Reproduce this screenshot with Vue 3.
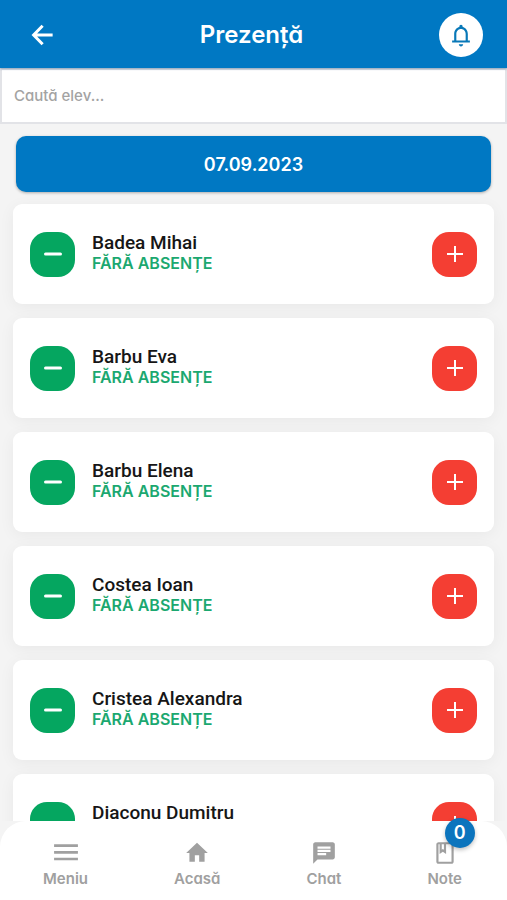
<script setup>
import { ref, computed } from 'vue'

const query = ref('')
const students = ref([
  { name: 'Badea Mihai', absences: 0 },
  { name: 'Barbu Eva', absences: 0 },
  { name: 'Barbu Elena', absences: 0 },
  { name: 'Costea Ioan', absences: 0 },
  { name: 'Cristea Alexandra', absences: 0 },
  { name: 'Diaconu Dumitru', absences: 0 },
])

const visible = computed(() =>
  students.value.filter((s) => s.name.toLowerCase().includes(query.value.toLowerCase())),
)

function change(student, step) {
  student.absences = Math.max(0, student.absences + step)
}
</script>

<template>
  <div class="page">
    <header class="topbar">
      <button class="back" type="button" aria-label="Înapoi">
        <svg viewBox="0 0 24 24" width="30" height="30" aria-hidden="true">
          <path d="M20.500 12H5.500M12.500 4.600 5.300 12l7.200 7.400" />
        </svg>
      </button>
      <h1>Prezență</h1>
      <button class="bell" type="button" aria-label="Notificări">
        <svg viewBox="0 0 24 24" width="26" height="26" aria-hidden="true">
          <path d="M12 22.500c1.100 0 2-.9 2-2h-4c0 1.100.9 2 2 2zM18.300 17v-6c0-3.070-1.900-5.640-4.800-6.320V4c0-.83-.67-1.500-1.500-1.500s-1.500.67-1.500 1.500v.68C7.640 5.360 5.700 7.920 5.700 11v6H3.800v2h16.400v-2zM16.300 17H7.700v-6c0-2.480 1.800-4.500 4.300-4.500s4.300 2.020 4.300 4.500z" />
        </svg>
      </button>
    </header>

    <input v-model="query" class="search" type="text" placeholder="Caută elev..." aria-label="Caută elev" />

    <main class="content">
      <button class="date" type="button">07.09.2023</button>
      <ul class="list">
        <li v-for="s in visible" :key="s.name" class="card">
          <button class="step minus" type="button" aria-label="Scade absență" @click="change(s, -1)">
            <svg viewBox="0 0 24 24" width="24" height="24" aria-hidden="true"><path d="M4.500 12h15" /></svg>
          </button>
          <div class="info">
            <span class="name">{{ s.name }}</span>
            <span class="status">{{ s.absences ? `${s.absences} ABSENȚE` : 'FĂRĂ ABSENȚE' }}</span>
          </div>
          <button class="step plus" type="button" aria-label="Adaugă absență" @click="change(s, 1)">
            <svg viewBox="0 0 24 24" width="24" height="24" aria-hidden="true"><path d="M4 12h16M12 4v16" /></svg>
          </button>
        </li>
      </ul>
    </main>

    <nav class="tabs">
      <a href="#meniu">
        <svg viewBox="0 0 24 24" width="26" height="26" aria-hidden="true">
          <path d="M1 4h22v2.400H1zM1 10.200h22v2.400H1zM1 16.400h22v2.400H1z" />
        </svg>
        Meniu
      </a>
      <a href="#acasa">
        <svg viewBox="0 0 24 24" width="26" height="26" aria-hidden="true">
          <path d="M10 20v-6h4v6h5v-8h3L12 2.500 2 12h3v8z" />
        </svg>
        Acasă
      </a>
      <a href="#chat">
        <svg viewBox="0 0 24 24" width="28" height="26" aria-hidden="true">
          <path d="M20 2H4c-1.100 0-1.990.9-1.990 2L2 22l4-4h14c1.100 0 2-.9 2-2V4c0-1.100-.9-2-2-2zM6 9h12v2H6V9zm8 5H6v-2h8v2zm4-6H6V6h12v2z" />
        </svg>
        Chat
      </a>
      <a href="#note">
        <span class="icon">
          <svg viewBox="0 0 24 24" width="26" height="26" aria-hidden="true">
            <path d="M18 2H6c-1.100 0-2 .9-2 2v16c0 1.100.9 2 2 2h12c1.100 0 2-.9 2-2V4c0-1.100-.9-2-2-2zM9 4h2v5l-1-.75L9 9V4zm9 16H6V4h1v9l3-2.250L13 13V4h5v16z" />
          </svg>
          <span class="badge">0</span>
        </span>
        Note
      </a>
    </nav>
  </div>
</template>

<style>
body {
  background: #f4f4f4;
}
</style>

<style scoped>
.page {
  display: flex;
  flex-direction: column;
  height: 100vh;
  overflow: hidden;
  background: #f4f4f4;
  font-family: Inter, "Open Sans", sans-serif;
  font-feature-settings: "cv11";
}

button {
  border: 0;
  padding: 0;
  font: inherit;
  font-feature-settings: inherit;
  cursor: pointer;
}

.topbar {
  position: relative;
  z-index: 1;
  flex: none;
  display: grid;
  grid-template-columns: 44px 1fr 44px;
  align-items: center;
  box-sizing: border-box;
  height: 68px;
  padding: 2px 24px 0 20px;
  background: #0078c3;
  color: #fff;
  box-shadow: 0 1px 2px rgba(0, 60, 110, 0.4);
}

h1 {
  margin: 0;
  font-size: 24px;
  line-height: 32px;
  font-weight: 600;
  text-align: center;
}

.back,
.bell {
  display: grid;
  place-items: center;
  width: 44px;
  height: 44px;
  background: none;
}

.back path {
  fill: none;
  stroke: #fff;
  stroke-width: 2.4;
}

.bell {
  border-radius: 50%;
  background: #fff;
}

.bell path {
  fill: #0878b8;
}

.search {
  flex: none;
  box-sizing: border-box;
  width: 100%;
  height: 56px;
  padding: 0 12px 2px;
  border: 2px solid #e2e3e7;
  border-radius: 0;
  outline: 0;
  background: #fff;
  color: #222;
  font: inherit;
  font-feature-settings: inherit;
  font-size: 15px;
  font-weight: 500;
}

.search::placeholder {
  color: #a3a3a3;
  opacity: 1;
}

.content {
  flex: 1;
  min-height: 0;
  padding: 12px 13px 0;
  overflow-y: auto;
  scrollbar-width: none;
}

.date {
  display: block;
  width: calc(100% - 6px);
  height: 56px;
  margin: 0 auto 12px;
  border-radius: 10px;
  background: #0078c3;
  color: #fff;
  font-size: 18px;
  font-weight: 600;
  box-shadow: 0 1px 3px rgba(0, 0, 0, 0.3);
}

.list {
  display: flex;
  flex-direction: column;
  gap: 14px;
  margin: 0;
  padding: 0;
  list-style: none;
}

.card {
  display: flex;
  align-items: center;
  gap: 17px;
  box-sizing: border-box;
  min-height: 100px;
  padding: 0 17px;
  border-radius: 9px;
  background: #fff;
  box-shadow: 0 3px 16px rgba(0, 0, 0, 0.05);
}

.step {
  display: grid;
  place-items: center;
  width: 45px;
  height: 45px;
  border-radius: 17px;
}

.step path {
  fill: none;
  stroke: #fff;
}

.minus {
  background: #05a660;
}

.minus path {
  stroke-width: 3;
  stroke-linecap: round;
}

.plus {
  background: #f43e33;
}

.plus path {
  stroke-width: 2;
}

.info {
  flex: 1;
  display: flex;
  flex-direction: column;
  padding-bottom: 2px;
}

.name {
  color: #161616;
  font-family: Roboto, sans-serif;
  font-size: 19px;
  line-height: 21px;
  font-weight: 500;
}

.status {
  color: #1ba870;
  font-size: 16px;
  line-height: 21px;
  font-weight: 600;
}

.tabs {
  flex: none;
  display: flex;
  justify-content: space-between;
  box-sizing: border-box;
  height: 79px;
  padding: 19px 45px 0 43px;
  border-radius: 26px 26px 0 0;
  background: #fff;
}

.tabs a {
  display: flex;
  flex-direction: column;
  align-items: center;
  gap: 3px;
  color: #a0a0a0;
  font-size: 15px;
  line-height: 20px;
  font-weight: 600;
  text-decoration: none;
}

.tabs svg {
  display: block;
  fill: #a0a0a0;
}

.icon {
  position: relative;
}

.badge {
  position: absolute;
  top: -22px;
  right: -17px;
  width: 30px;
  height: 30px;
  border-radius: 50%;
  background: #0b74bd;
  color: #fff;
  font-size: 18px;
  line-height: 30px;
  text-align: center;
  box-shadow: 0 2px 4px rgba(0, 0, 0, 0.25);
}
</style>
